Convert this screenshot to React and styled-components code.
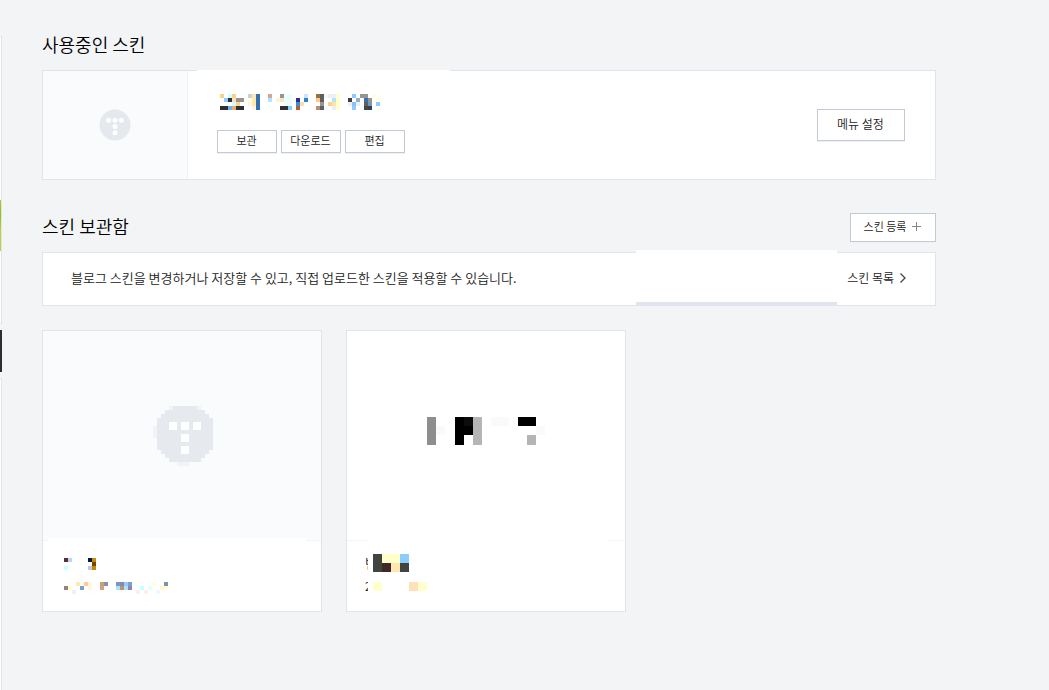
import React from "react";
import styled, { createGlobalStyle } from "styled-components";

const Global = createGlobalStyle`
  * { box-sizing: border-box; }
  body {
    margin: 0;
    background: #f3f4f6;
    color: #222;
    font-family: "Noto Sans CJK KR", sans-serif;
    font-weight: 350;
  }
  h1, h2, p, ul { margin: 0; padding: 0; }
  button, a { font: inherit; color: inherit; text-decoration: none; }
`;

const Page = styled.div`
  display: flex;
  min-height: 100vh;
`;

const Rail = styled.aside`
  display: flex;
  flex-direction: column;
  width: 2px;
  padding-top: 36px;
`;

const RailPanel = styled.div`
  height: ${(p) => p.$height};
  flex-grow: ${(p) => (p.$grow ? 1 : 0)};
  padding-top: ${(p) => p.$inset || "0"};
  background: #fff;
  border: solid #e0e4ec;
  border-width: 1px 1px ${(p) => (p.$grow ? "0" : "1px")} 0;
`;

const RailThumb = styled.div`
  height: 51px;
  background: linear-gradient(#a9cc22, #93bf0a 30%, #bdd042 60%);
`;

const RailBanner = styled.div`
  height: 42px;
  margin: 6px 0;
  background: #2e2e32;
`;

const Main = styled.main`
  flex: 1;
  min-width: 0;
  padding: 30px 113px 40px 40px;
`;

const SectionHead = styled.div`
  display: flex;
  align-items: center;
  justify-content: space-between;
  height: 30px;
  margin-bottom: 10px;
`;

const Title = styled.h2`
  padding-bottom: 2px;
  font-size: 18px;
  line-height: 28px;
  font-weight: 350;
  color: #000;
`;

const Panel = styled.section`
  position: relative;
  display: flex;
  align-items: center;
  background: #fff;
  border: 1px solid #e0e4ec;
`;

const CurrentSkin = styled(Panel)`
  height: 110px;
  margin-bottom: 32px;
  padding-right: 30px;
`;

const Preview = styled.div`
  display: flex;
  align-items: center;
  justify-content: center;
  align-self: stretch;
  width: 145px;
  background: #fafbfd;
  border-right: 1px solid #f0f2f5;
`;

const SkinInfo = styled.div`
  flex: 1;
  display: flex;
  flex-direction: column;
  gap: 20px;
  padding: 0 0 4px 29px;
`;

const SkinName = styled.div`
  padding-left: 3px;
  height: 16px;
`;

const Actions = styled.div`
  display: flex;
  gap: 4px;
`;

const Button = styled.button`
  display: flex;
  align-items: center;
  justify-content: center;
  gap: 6px;
  width: ${(p) => p.$width};
  height: ${(p) => p.$height};
  padding: 0 1px 2px 0;
  font-size: ${(p) => p.$size || "11px"};
  line-height: 16px;
  background: #fff;
  border: 1px solid #c3cad5;
  box-shadow: 0 1px 0 #f0f1f3;
`;

const TopCover = styled.div`
  position: absolute;
  top: -1px;
  left: 154px;
  width: 253px;
  height: 1px;
  background: #fff;
`;

const Notice = styled(Panel)`
  justify-content: space-between;
  height: 54px;
  margin-bottom: 24px;
  padding: 0 28px 2px 28px;
  font-size: 13px;
  line-height: 20px;
`;

const NoticeCover = styled.div`
  position: absolute;
  top: -3px;
  right: 98px;
  width: 201px;
  height: 56px;
  background: #fff;
  border-bottom: 4px solid #e0e4ee;
`;

const ListLink = styled.a`
  display: flex;
  align-items: center;
  gap: 5px;
  font-size: 12px;
`;

const SkinList = styled.ul`
  display: flex;
  flex-wrap: wrap;
  gap: 24px;
  list-style: none;
`;

const SkinCard = styled.li`
  width: 280px;
  background: #fff;
  border: 1px solid #e0e4ec;
`;

const CardImage = styled.div`
  position: relative;
  display: flex;
  align-items: center;
  justify-content: center;
  height: 210px;
  padding: ${(p) => p.$padding};
  background: ${(p) => p.$color};
  border-bottom: 1px solid #f3f4f6;
`;

const CardCover = styled.div`
  position: absolute;
  top: 207px;
  left: ${(p) => p.$left};
  right: ${(p) => p.$right};
  height: 3px;
  background: #fff;
`;

const CardInfo = styled.div`
  display: flex;
  flex-direction: column;
  gap: 8px;
  height: 70px;
  padding: ${(p) => p.$padding};
`;

const CardLine = styled.div`
  display: flex;
  align-items: center;
  gap: 5px;
  height: ${(p) => p.$height};
`;

const Clipped = styled.span`
  width: 3px;
  overflow: hidden;
  white-space: nowrap;
  font-size: ${(p) => p.$size};
  line-height: ${(p) => p.$line};
`;

const Drawing = styled.svg`
  display: block;
  flex: none;
`;

/* Each row lists [column, colour, span] blocks of a censored text. */
function Mosaic({ cell, cols, rows }) {
  return (
    <Drawing width={cols * cell} height={rows.length * cell} shapeRendering="crispEdges" aria-hidden="true">
      {rows.map((row, y) =>
        row.map(([x, fill, span = 1]) => (
          <rect key={`${y}-${x}`} x={x * cell} y={y * cell} width={span * cell} height={cell} fill={fill} />
        ))
      )}
    </Drawing>
  );
}

const nameRows = [
  [[0, "#ffcf90"], [2, "#ccffff"], [3, "#ffcf90"], [7, "#c8d0e0"], [8, "#ffe8b0"], [9, "#366eb0"], [12, "#d0a898"], [15, "#959692"], [16, "#e8ffff", 2], [19, "#fffff0"], [21, "#cfe4f8"], [24, "#997044"], [25, "#5f5f5f"], [26, "#e8ffff"], [27, "#f0eef2", 2], [29, "#ffffcc"], [33, "#8cccff"], [35, "#959692", 2], [38, "#ffffe0"]],
  [[1, "#8cccff"], [2, "#303030"], [3, "#ffdfb8"], [4, "#959692", 2], [6, "#fffff0"], [7, "#ffffdd"], [8, "#ffe8b0"], [9, "#366eb0"], [12, "#aee6ff"], [14, "#fff0e0"], [15, "#ffe4c4"], [16, "#e8ffff", 2], [19, "#2e2e90"], [21, "#2a86c8"], [24, "#ffc88c"], [25, "#5f5f5f"], [28, "#aee6ff"], [29, "#ffffcc"], [32, "#443c44"], [34, "#90b0c8"], [36, "#3a6fb0"], [37, "#959692"], [39, "#ffffe0"]],
  [[3, "#ccffff"], [4, "#ffcf90"], [7, "#fff4dc"], [8, "#ffe8b0"], [9, "#366eb0"], [16, "#e8ffff", 2], [19, "#3090d8"], [20, "#ffdcb0"], [25, "#959692"], [27, "#ffcf90"], [28, "#ffe4a8"], [29, "#ffffcc"], [32, "#f0eef2"], [33, "#8cc0f8"], [34, "#f0eef2"], [36, "#5f5f5f"], [37, "#7898b0"], [39, "#8cccff"]],
  [[0, "#303030", 2], [2, "#70b0f0"], [3, "#f0a868"], [4, "#303030", 2], [8, "#fff4dc"], [9, "#366eb0"], [15, "#303030", 2], [17, "#8cccff"], [19, "#b06030"], [24, "#b89070"], [25, "#5f5f5f"], [26, "#f4faff"], [28, "#f0eef2"], [29, "#ffffcc"], [33, "#8cccff"], [36, "#404848"], [37, "#304060"]],
];

const firstTitle = [
  [[0, "#5a2c34"], [1, "#b0d8ff"], [6, "#001848"], [7, "#c88808"]],
  [[7, "#704800"]],
  [[0, "#ccffff"], [6, "#c0c8e0"], [7, "#c88808"]],
];

const firstDate = [
  [[3, "#ffe8b8"], [4, "#fffde8"], [5, "#ffc8a0"], [6, "#fff8d8"], [9, "#c8a078"], [10, "#8890a8"], [13, "#7898c0"], [14, "#8888b0"], [15, "#98c8f8"], [16, "#78a0d0"], [22, "#ffffdc"], [25, "#8090a8"]],
  [[0, "#988088"], [1, "#ffffcc"], [4, "#78a0c8"], [6, "#fff8d8"], [9, "#d0a080"], [13, "#b0e0ff"], [14, "#c09070"], [15, "#b0e0ff"], [16, "#8888b0"], [19, "#c8ffff"], [21, "#e4ffff"], [24, "#fff8d8"], [25, "#ffffd8"]],
  [[2, "#f0f0f8"], [6, "#f8fffc"], [18, "#fff0ec"], [20, "#fff0ec"], [23, "#f0f8ff"]],
];

const secondTitle = [
  [[0, "#404540"], [1, "#ffffc8"], [2, "#ffffcc"], [3, "#8cccff"]],
  [[0, "#404540"], [1, "#402828"], [2, "#ffe8b0"], [3, "#404540"]],
];

const secondDate = [[[0, "#ffffcc"], [4, "#ffe0b8"], [5, "#ffffcc"]]];

function SmallLogo() {
  return (
    <Drawing width="32" height="32" viewBox="0 0 32 32" aria-hidden="true">
      <circle cx="16" cy="16" r="15.5" fill="#e5e8ed" />
      <g fill="#fff">
        <circle cx="9.5" cy="11.2" r="2.5" />
        <circle cx="16" cy="11.2" r="2.5" />
        <circle cx="22.3" cy="11.2" r="2.5" />
        <circle cx="16" cy="17.5" r="2.5" />
        <circle cx="16" cy="23.8" r="2.5" />
      </g>
    </Drawing>
  );
}

function PixelLogo() {
  return (
    <Drawing width="60" height="60" viewBox="0 0 60 60" shapeRendering="crispEdges" aria-hidden="true">
      <path fill="#f1f3f7" d="M16 0h32v4H16zM0 20h4v12H0zM24 56h12v4H24z" />
      <path
        fill="#e6e9ee"
        d="M20 0h24v4h8v4h4v4h4v32h-4v4h-4v4h-4v4H16v-4h-4v-4H8v-4H4V12h4V8h4V4h8z"
      />
      <path fill="#fff" d="M16 16h8v8h-8zM28 16h8v8h-8zM40 16h8v8h-8zM28 28h8v8h-8zM28 40h8v8h-8z" />
    </Drawing>
  );
}

function BlockLogo() {
  return (
    <Drawing width="118" height="36" viewBox="0 0 118 36" shapeRendering="crispEdges" aria-hidden="true">
      <path fill="#fafafa" d="M9 9h9v9H9zM64 0h18v9H64zM109 9h9v9h-9z" />
      <path fill="#8e8e8e" d="M0 0h9v28H0z" />
      <path fill="#000" d="M28 0h18v18h-9v10h-9zM91 0h18v9H91z" />
      <path fill="#0c0c0c" d="M37 0h9v9h-9z" />
      <path fill="#b5b5b5" d="M46 0h9v28h-9zM100 18h9v10h-9z" />
    </Drawing>
  );
}

export default function App() {
  return (
    <Page>
      <Global />
      <Rail>
        <RailPanel $height="288px" $inset="163px">
          <RailThumb />
        </RailPanel>
        <RailBanner />
        <RailPanel $grow />
      </Rail>
      <Main>
        <SectionHead>
          <Title>사용중인 스킨</Title>
        </SectionHead>
        <CurrentSkin>
          <Preview>
            <SmallLogo />
          </Preview>
          <SkinInfo>
            <SkinName>
              <Mosaic cell={4} cols={40} rows={nameRows} />
            </SkinName>
            <Actions>
              <Button $width="60px" $height="23px">보관</Button>
              <Button $width="60px" $height="23px">다운로드</Button>
              <Button $width="60px" $height="23px">편집</Button>
            </Actions>
          </SkinInfo>
          <Button $width="88px" $height="32px" $size="12px">메뉴 설정</Button>
          <TopCover />
        </CurrentSkin>

        <SectionHead>
          <Title>스킨 보관함</Title>
          <Button $width="86px" $height="29px">
            스킨 등록
            <Drawing width="9" height="9" viewBox="0 0 9 9" aria-hidden="true">
              <path d="M4 0h1v4h4v1H5v4H4V5H0V4h4z" fill="#808692" />
            </Drawing>
          </Button>
        </SectionHead>
        <Notice>
          <p>블로그 스킨을 변경하거나 저장할 수 있고, 직접 업로드한 스킨을 적용할 수 있습니다.</p>
          <ListLink href="#list">
            스킨 목록
            <Drawing width="8" height="12" viewBox="0 0 8 12" aria-hidden="true">
              <path d="M1.5 1.500L6 6l-4.500 4.500" fill="none" stroke="#444" strokeWidth="1.300" />
            </Drawing>
          </ListLink>
          <NoticeCover />
        </Notice>

        <SkinList>
          <SkinCard>
            <CardImage $color="#fafbfd" $padding="0 0 0 2px">
              <PixelLogo />
              <CardCover $left="5px" $right="15px" />
            </CardImage>
            <CardInfo $padding="17px 0 0 21px">
              <Mosaic cell={4} cols={8} rows={firstTitle} />
              <CardLine $height="20px">
                <Mosaic cell={4} cols={26} rows={firstDate} />
              </CardLine>
            </CardInfo>
          </SkinCard>
          <SkinCard>
            <CardImage $color="#fff" $padding="0 0 2px">
              <BlockLogo />
              <CardCover $left="21px" $right="17px" />
            </CardImage>
            <CardInfo $padding="13px 0 0 18px">
              <CardLine $height="18px">
                <Clipped $size="13px" $line="20px">번</Clipped>
                <Mosaic cell={9} cols={4} rows={secondTitle} />
              </CardLine>
              <CardLine $height="12px">
                <Clipped $size="12px" $line="16px">2</Clipped>
                <Mosaic cell={9} cols={6} rows={secondDate} />
              </CardLine>
            </CardInfo>
          </SkinCard>
        </SkinList>
      </Main>
    </Page>
  );
}
